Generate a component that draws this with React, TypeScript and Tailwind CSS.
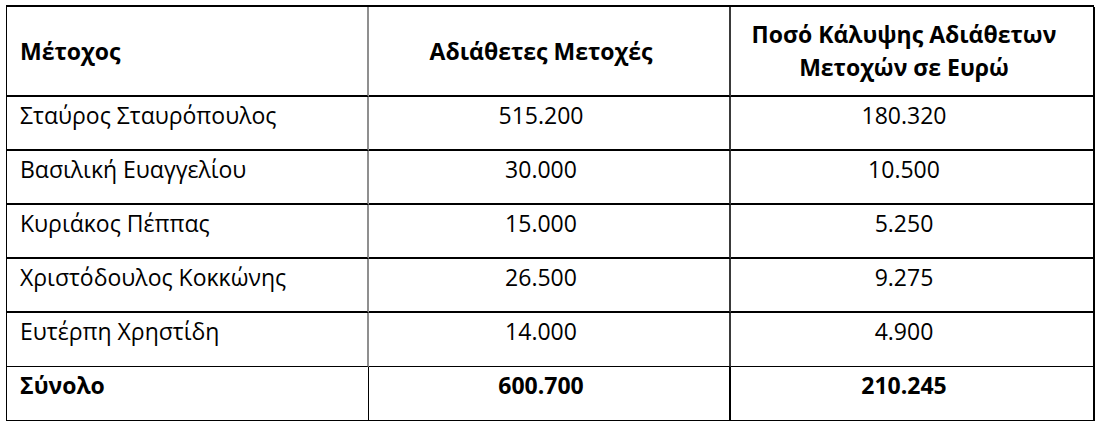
const rows = [
  { name: "Σταύρος Σταυρόπουλος", shares: "515.200", amount: "180.320" },
  { name: "Βασιλική Ευαγγελίου", shares: "30.000", amount: "10.500" },
  { name: "Κυριάκος Πέππας", shares: "15.000", amount: "5.250" },
  { name: "Χριστόδουλος Κοκκώνης", shares: "26.500", amount: "9.275" },
  { name: "Ευτέρπη Χρηστίδη", shares: "14.000", amount: "4.900" },
]

export default function App() {
  return (
    <div className="min-h-[430px] w-[1101px] bg-white pl-[6px] pt-[5px] text-[23px] leading-[33px] text-black [font-family:'Open_Sans',sans-serif]">
      <div className="grid w-[1088px] grid-cols-[362px_362px_364px] border-l border-t-2 border-black">
        {/* header */}
        <div className="flex h-[90px] items-center border-b-2 border-r-2 border-b-black border-r-[#8f8f8f] pl-[13px] font-bold">
          Μέτοχος
        </div>
        <div className="flex h-[90px] items-center justify-center border-b-2 border-r-2 border-b-black border-r-[#3a3a3a] pr-[16px] font-bold">
          Αδιάθετες Μετοχές
        </div>
        <div className="flex h-[90px] items-center justify-center border-b-2 border-r-2 border-black pr-[16px] text-center font-bold">
          Ποσό Κάλυψης Αδιάθετων
          <br />
          Μετοχών σε Ευρώ
        </div>

        {rows.map((r, i) => {
          const last = i === rows.length - 1
          return [
            <div
              key={r.name + "a"}
              className={
                "h-[54px] border-r-2 border-r-[#8f8f8f] pl-[13px] pt-[2px] " +
                (last ? "h-[53px] border-b border-b-black" : "border-b-2 border-b-black")
              }
            >
              {r.name}
            </div>,
            <div
              key={r.name + "b"}
              className={
                "h-[54px] border-r-2 border-r-[#3a3a3a] pr-[16px] pt-[2px] text-center " +
                (last ? "h-[53px] border-b border-b-black" : "border-b-2 border-b-black")
              }
            >
              {r.shares}
            </div>,
            <div
              key={r.name + "c"}
              className={
                "h-[54px] border-r-2 border-r-black pr-[16px] pt-[2px] text-center " +
                (last ? "h-[53px] border-b border-b-black" : "border-b-2 border-b-black")
              }
            >
              {r.amount}
            </div>,
          ]
        })}

        {/* total */}
        <div className="h-[54px] border-b border-r border-black pl-[13px] pt-[2px] font-bold">Σύνολο</div>
        <div className="h-[54px] border-b border-r-2 border-black pr-[16px] pt-[2px] text-center font-bold">
          600.700
        </div>
        <div className="h-[54px] border-b border-r-2 border-black pr-[16px] pt-[2px] text-center font-bold">
          210.245
        </div>
      </div>
    </div>
  )
}
